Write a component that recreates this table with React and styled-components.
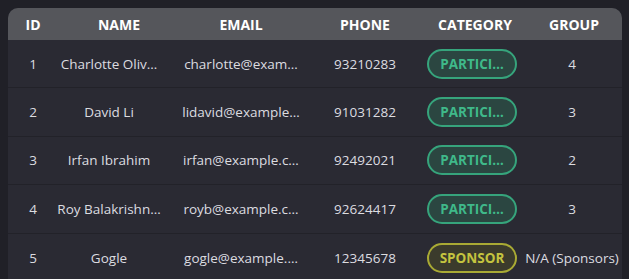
import React from 'react';
import styled, { createGlobalStyle } from 'styled-components';

const GlobalStyle = createGlobalStyle`
  html, body {
    margin: 0;
    background: #202027;
  }
  body {
    padding: 8px;
    font-family: "Open Sans", "Noto Sans", sans-serif;
  }
`;

const columns = '50px 102px 162px 86px 128px 72px 1fr';

const TableWrapper = styled.div`
  width: 614px;
  background: #2a2a33;
  border-radius: 10px 10px 0 0;
  overflow: hidden;
`;

const HeaderRow = styled.div`
  display: grid;
  grid-template-columns: ${columns};
  height: 32px;
  align-items: center;
  background: #55565b;
`;

const HeaderCell = styled.div`
  color: #ffffff;
  font-size: 14px;
  font-weight: 700;
  text-align: center;
  text-transform: uppercase;
  padding-left: ${props => props.$shift || 0}px;
  white-space: nowrap;
`;

const Row = styled.div`
  display: grid;
  grid-template-columns: ${columns};
  height: 48.4px;
  box-sizing: border-box;
  align-items: center;
  border-bottom: 1px solid #222229;

  &:last-child {
    border-bottom: none;
  }
`;

const Cell = styled.div`
  color: #dcdce0;
  font-size: 13.5px;
  text-align: center;
  white-space: nowrap;
  display: flex;
  justify-content: center;
  min-width: 0;
`;

const Badge = styled.span`
  display: inline-flex;
  align-items: center;
  height: 30px;
  box-sizing: border-box;
  padding: 0 11px;
  border-radius: 15px;
  border: 2px solid ${props => props.$kind === 'sponsor' ? '#a9aa34' : '#36a47c'};
  background: ${props => props.$kind === 'sponsor' ? '#3b3b2c' : '#2b4641'};
  color: ${props => props.$kind === 'sponsor' ? '#c4c43f' : '#3fb98a'};
  font-size: 13.5px;
  font-weight: 700;
  text-transform: uppercase;
`;

const members = [
  { id: 1, name: 'Charlotte Oliv…', email: 'charlotte@exam…', phone: '93210283', kind: 'participant', category: 'Partici…', group: '4' },
  { id: 2, name: 'David Li', email: 'lidavid@example…', phone: '91031282', kind: 'participant', category: 'Partici…', group: '3' },
  { id: 3, name: 'Irfan Ibrahim', email: 'irfan@example.c…', phone: '92492021', kind: 'participant', category: 'Partici…', group: '2' },
  { id: 4, name: 'Roy Balakrishn…', email: 'royb@example.c…', phone: '92624417', kind: 'participant', category: 'Partici…', group: '3' },
  { id: 5, name: 'Gogle', email: 'gogle@example.…', phone: '12345678', kind: 'sponsor', category: 'Sponsor', group: 'N/A (Sponsors)' },
];

const App = () => {
  return (
    <>
      <GlobalStyle />
      <TableWrapper>
        <HeaderRow>
          <HeaderCell>ID</HeaderCell>
          <HeaderCell $shift={20}>Name</HeaderCell>
          <HeaderCell>Email</HeaderCell>
          <HeaderCell>Phone</HeaderCell>
          <HeaderCell $shift={6}>Category</HeaderCell>
          <HeaderCell $shift={4}>Group</HeaderCell>
          <div />
        </HeaderRow>
        {members.map((m) => (
          <Row key={m.id}>
            <Cell>{m.id}</Cell>
            <Cell>{m.name}</Cell>
            <Cell>{m.email}</Cell>
            <Cell>{m.phone}</Cell>
            <Cell>
              <Badge $kind={m.kind}>{m.category}</Badge>
            </Cell>
            <Cell>{m.group}</Cell>
            <div />
          </Row>
        ))}
      </TableWrapper>
    </>
  );
};

export default App;
